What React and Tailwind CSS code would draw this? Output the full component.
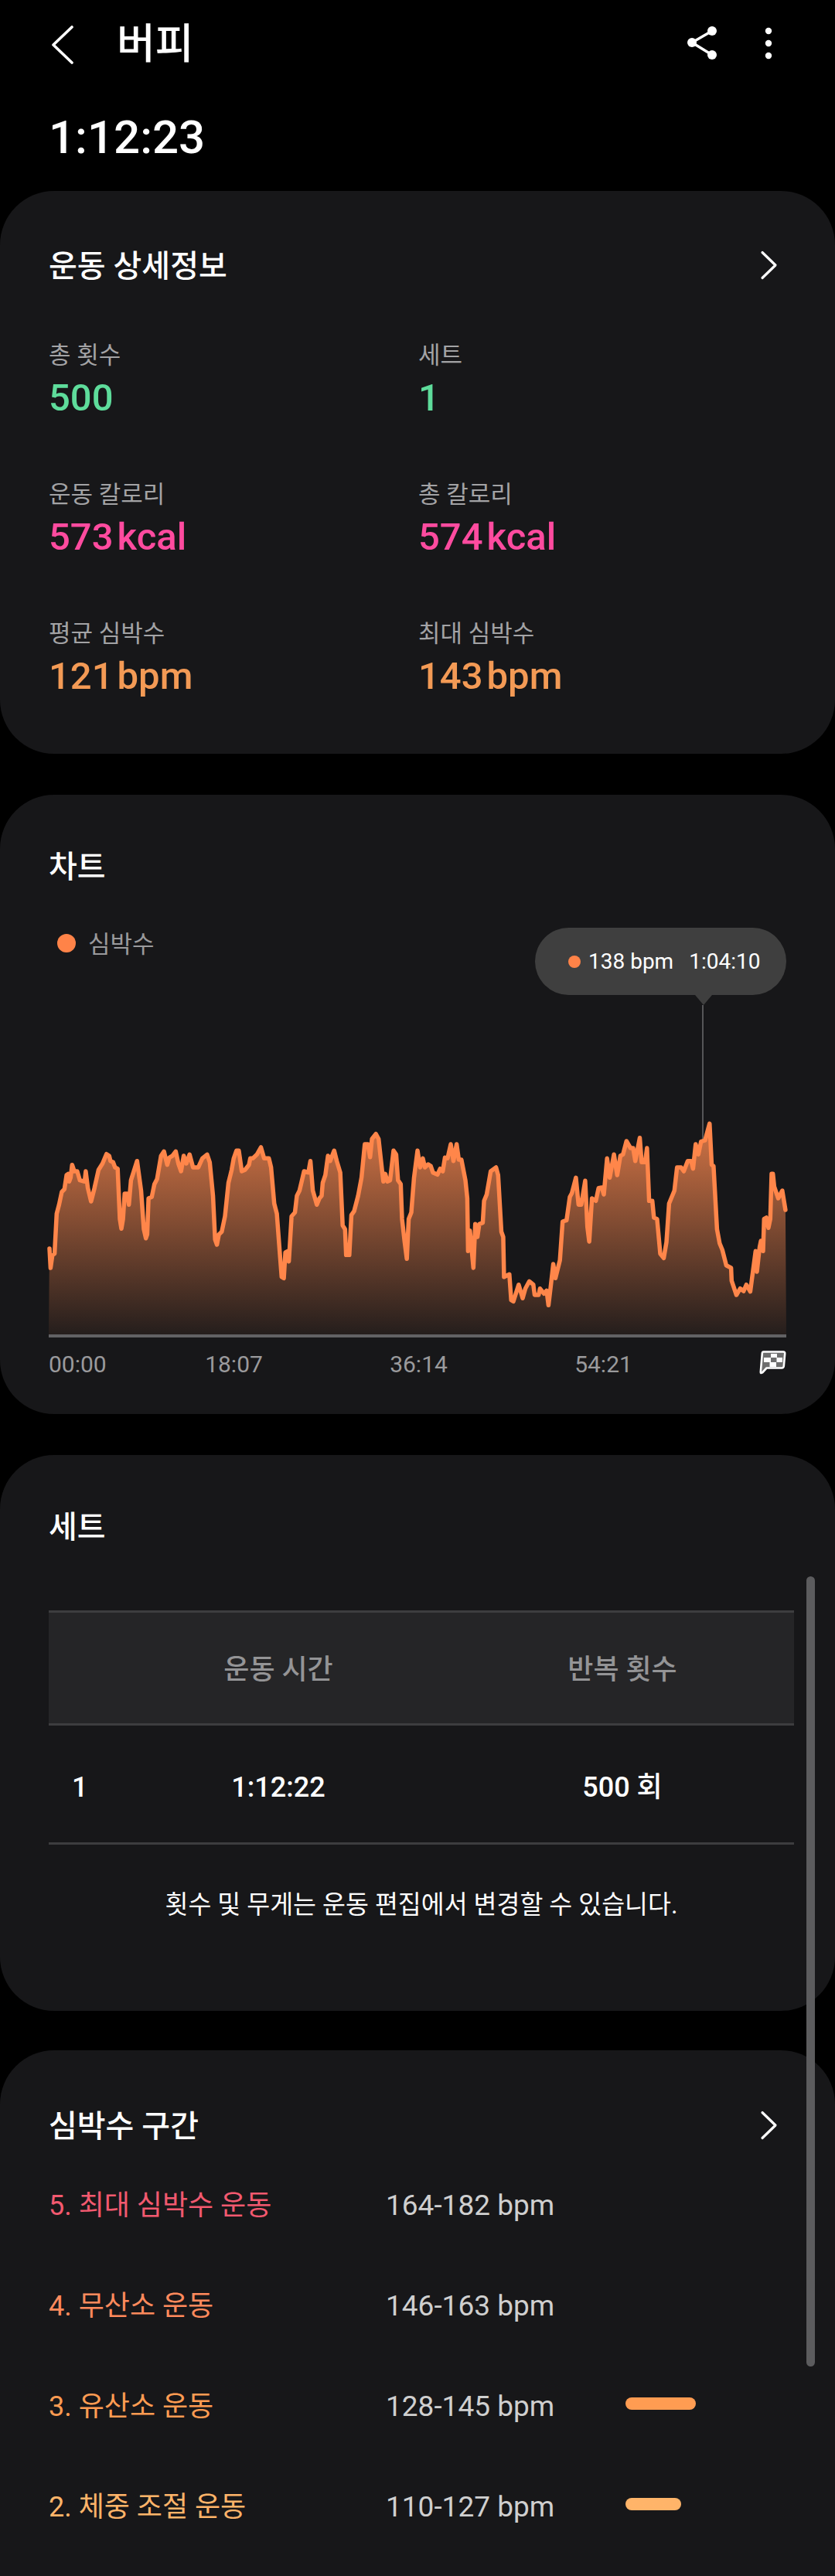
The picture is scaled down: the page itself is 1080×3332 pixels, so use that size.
import React from "react";

const left = [[186,645],[190,720],[197,670],[205,665],[213,510],[222,475],[232,425],[242,415],[250,360],[256,355],[260,385],[265,370],[271,320],[279,345],[290,345],[300,380],[318,385],[322,345],[330,410],[342,462],[355,410],[370,340],[385,315],[400,278],[410,285],[415,305],[425,310],[432,330],[442,335],[450,530],[456,568],[462,530],[468,432],[478,432],[484,475],[492,380],[515,305],[530,420],[540,570],[548,605],[553,590],[558,450],[570,445],[580,395],[590,375],[605,285],[616,268],[628,320],[636,292],[648,285],[660,268],[670,315],[680,345],[690,285],[700,315],[712,280],[725,330],[745,330],[760,295],[778,280],[788,310],[800,440],[808,610],[815,630],[822,590],[833,580],[845,520],[858,390],[870,340],[878,295],[888,265],[897,265],[908,345],[920,340],[935,320],[940,295],[950,295],[965,280],[980,252],[992,295],[1010,295],[1018,330],[1030,470],[1040,510],[1050,650],[1058,755],[1066,760],[1072,660],[1082,655],[1085,695],[1095,520],[1108,505],[1115,440],[1125,420],[1142,345],[1158,350],[1166,305],[1175,420],[1190,475],[1200,450],[1208,440],[1212,390],[1222,360],[1232,285],[1240,305],[1255,265],[1265,305],[1278,350],[1287,555],[1296,570],[1300,670],[1305,670],[1312,670],[1320,515],[1330,500],[1345,440],[1358,370],[1370,240],[1382,240],[1390,290],[1397,220],[1412,200],[1422,220],[1435,340],[1440,385],[1447,355],[1455,385],[1465,380],[1478,265],[1488,280],[1495,380],[1505,395],[1510,530],[1520,620],[1528,685],[1535,530],[1545,505],[1555,370]];
const right = [[0,265],[10,330],[20,295],[28,330],[40,318],[50,325],[58,350],[75,358],[85,335],[95,345],[103,292],[113,295],[125,240],[135,305],[147,240],[155,300],[165,300],[180,380],[187,450],[190,655],[197,575],[210,720],[217,550],[225,600],[232,550],[245,545],[250,460],[260,435],[275,345],[295,330],[303,360],[315,580],[322,600],[325,755],[345,745],[352,845],[360,850],[380,785],[395,838],[405,800],[420,772],[435,785],[440,825],[455,825],[460,800],[475,820],[485,808],[492,865],[500,795],[510,705],[518,760],[535,690],[545,540],[560,535],[572,445],[580,430],[595,370],[605,475],[615,475],[630,382],[638,560],[645,618],[655,450],[670,460],[680,410],[692,408],[700,435],[712,295],[722,370],[738,280],[750,360],[762,285],[772,280],[785,228],[800,255],[810,255],[818,305],[835,215],[842,310],[855,310],[862,255],[870,460],[882,460],[888,525],[900,530],[912,665],[925,682],[935,620],[945,470],[965,420],[975,330],[990,330],[1000,345],[1015,305],[1028,305],[1035,335],[1045,240],[1055,280],[1065,230],[1080,225],[1097,160],[1105,320],[1112,325],[1125,570],[1135,625],[1145,650],[1160,710],[1178,720],[1180,770],[1198,825],[1212,800],[1225,810],[1235,785],[1250,812],[1270,655],[1275,735],[1285,640],[1290,615],[1298,655],[1302,530],[1310,525],[1318,565],[1325,530],[1330,355],[1335,355],[1340,405],[1355,450],[1370,420],[1382,495]];
const pts = [
  ...left.map(([x, y]) => [x / 2.904, 1400 + y / 3]),
  ...right.map(([x, y]) => [540 + x / 2.904, 1400 + y / 3]),
].map(([x, y]) => [Math.round(x * 10) / 10, Math.round(y * 10) / 10]);
const linePath = "M" + pts.map((p) => p.join(" ")).join("L");
const areaPath = `M63 1726L${pts.map((p) => p.join(" ")).join("L")}L1017 1726Z`;

function Chevron() {
  return (
    <svg width="24" height="40" viewBox="0 0 24 40" fill="none" className="shrink-0">
      <path d="M3 3.5 L20 20 L3 36.5" stroke="#fff" strokeWidth="3.2" strokeLinecap="round" strokeLinejoin="round" />
    </svg>
  );
}

function Stat({ label, value, unit, color }) {
  return (
    <div>
      <div className="h-[40px] leading-[44px] text-[31px] text-[#a3a3a5] whitespace-nowrap">{label}</div>
      <div className={`h-[66px] leading-[74px] text-[49px] font-medium whitespace-nowrap ${color}`}>
        {value}
        {unit && <span className="ml-[5px]">{unit}</span>}
      </div>
    </div>
  );
}

function Zone({ label, color, range, bar }) {
  return (
    <div className="h-[130px] grid grid-cols-[436px_310px_1fr] items-center text-[36px] whitespace-nowrap">
      <div className={`pt-[4px] ${color}`}>{label}</div>
      <div className="pt-[4px] text-[#cfcfcf] text-[37px]">{range}</div>
      <div>{bar}</div>
    </div>
  );
}

export default function App() {
  return (
    <div className="relative w-[1080px] h-[3332px] overflow-hidden bg-black text-white font-[Roboto,'Noto_Sans_CJK_KR',sans-serif]">
      <header className="h-[116px] flex items-center pl-[66px] pr-[81px]">
        <svg width="30" height="50" viewBox="0 0 30 50" fill="none" className="shrink-0">
          <path d="M27 2 L3 25 L27 48" stroke="#fff" strokeWidth="3.6" strokeLinecap="round" strokeLinejoin="round" />
        </svg>
        <h1 className="ml-[55px] text-[54px] font-medium leading-[60px]">버피</h1>
        <div className="ml-auto flex items-center gap-[57px] -mt-[4px]">
          <svg width="44" height="48" viewBox="0 0 44 48" fill="none">
            <path d="M33 8 L7 23 L33 39" stroke="#fff" strokeWidth="3.4" />
            <circle cx="7" cy="23" r="6" fill="#fff" />
            <circle cx="33" cy="8" r="6" fill="#fff" />
            <circle cx="33" cy="39" r="6" fill="#fff" />
          </svg>
          <svg width="10" height="44" viewBox="0 0 10 44" fill="#fff">
            <circle cx="5" cy="6" r="4.2" />
            <circle cx="5" cy="22" r="4.2" />
            <circle cx="5" cy="38" r="4.2" />
          </svg>
        </div>
      </header>
      <div className="h-[120px] mb-[11px] pl-[63px] pt-[4px] flex items-center text-[60px] font-medium">1:12:23</div>

      <section className="rounded-[70px] bg-[#171719] pt-[64px] pb-[71px]">
        <div className="h-[64px] flex items-center justify-between pl-[63px] pr-[73px]">
          <h2 className="pt-[4px] text-[40px] font-medium">운동 상세정보</h2>
          <Chevron />
        </div>
        <div className="mt-[63px] pl-[63px] grid grid-cols-[478px_1fr] gap-y-[74px]">
          <Stat label="총 횟수" value="500" color="text-[#5edc9b]" />
          <Stat label="세트" value="1" color="text-[#5edc9b]" />
          <Stat label="운동 칼로리" value="573" unit="kcal" color="text-[#ff4b9f]" />
          <Stat label="총 칼로리" value="574" unit="kcal" color="text-[#ff4b9f]" />
          <Stat label="평균 심박수" value="121" unit="bpm" color="text-[#f39a55]" />
          <Stat label="최대 심박수" value="143" unit="bpm" color="text-[#f39a55]" />
        </div>
      </section>

      <section className="mt-[53px] rounded-[70px] bg-[#171719] pt-[68px] pb-[47px] px-[63px]">
        <h2 className="h-[48px] leading-[52px] text-[40px] font-medium">차트</h2>
        <div className="relative mt-[56px]">
          <div className="h-[40px] flex items-center pl-[11px]">
            <span className="w-[24px] h-[24px] rounded-full bg-[#ff8348]"></span>
            <span className="ml-[16px] pt-[4px] text-[31px] text-[#9a9a9c]">심박수</span>
          </div>
          <svg viewBox="63 1240 954 486" className="block w-[954px] h-[486px] overflow-visible">
            <defs>
              <linearGradient id="hrFill" gradientUnits="userSpaceOnUse" x1="0" y1="1450" x2="0" y2="1726">
                <stop offset="0" stopColor="#ff8a50" stopOpacity="0.82" />
                <stop offset="1" stopColor="#ff8a50" stopOpacity="0.06" />
              </linearGradient>
            </defs>
            <path d="M909 1300 V1475" stroke="#555557" strokeWidth="2" />
            <path d={areaPath} fill="url(#hrFill)" />
            <path d={linePath} fill="none" stroke="#ff864a" strokeWidth="5.5" strokeLinejoin="round" strokeLinecap="round" />
          </svg>
          <div className="h-[4px] bg-[#626264]"></div>
          <div className="absolute left-[629px] top-0 w-[325px] h-[87px] rounded-[44px] bg-[#3f3f3f] flex items-center pl-[43px] text-[28px] whitespace-nowrap">
            <span className="w-[16px] h-[16px] rounded-full bg-[#ff8348]"></span>
            <span className="ml-[10px]">138 bpm</span>
            <span className="ml-[20px]">1:04:10</span>
            <span className="absolute left-[207px] top-[87px] w-0 h-0 border-x-[11px] border-x-transparent border-t-[13px] border-t-[#3f3f3f]"></span>
          </div>
        </div>
        <div className="mt-[12px] h-[40px] flex items-center text-[30px] text-[#9a9a9c] whitespace-nowrap">
          <span className="w-[120px] pt-[4px]">00:00</span>
          <span className="w-[239px] pt-[4px] text-center">18:07</span>
          <span className="w-[239px] pt-[4px] text-center">36:14</span>
          <span className="w-[239px] pt-[4px] text-center">54:21</span>
          <svg width="35" height="31" viewBox="0 0 35 31" className="ml-auto">
            <path d="M5.5 1.5 H31 Q33.5 1.5 33.2 4 L31.8 20 Q31.6 22.5 29 22.5 H9.5 L4 28.5 Q1.6 30 1.8 27.5 L3.8 3.5 Q4 1.5 5.5 1.5 Z" fill="#6e6e6e" stroke="#fff" strokeWidth="2.6" strokeLinejoin="round" />
            <path d="M15 4 H23 V9 H30 V15 H22 V21 H13.5 V15 H6 V9 H15 Z M15 9 V15 H22.5 V9 Z" fill="#fff" fillRule="evenodd" />
          </svg>
        </div>
      </section>

      <section className="mt-[53px] rounded-[70px] bg-[#171719] pt-[68px] pb-[115px]">
        <h2 className="h-[48px] leading-[52px] pl-[63px] text-[40px] font-medium">세트</h2>
        <div className="mt-[85px] ml-[63px] w-[964px]">
          <div className="h-[149px] pt-[4px] bg-[#252527] border-y-[3px] border-[#3d3d3f] grid grid-cols-[74px_446px_444px] items-center text-[36px] font-medium text-[#949496] text-center">
            <span></span>
            <span>운동 시간</span>
            <span>반복 횟수</span>
          </div>
          <div className="h-[154px] border-b-[3px] border-[#3d3d3f] grid grid-cols-[74px_446px_444px] items-center text-[36px] font-medium pt-[9px]">
            <span className="pl-[30px]">1</span>
            <span className="text-center">1:12:22</span>
            <span className="text-center">500 회</span>
          </div>
        </div>
        <p className="mt-[52px] h-[48px] pl-[10px] leading-[52px] text-center text-[32.5px] whitespace-nowrap">횟수 및 무게는 운동 편집에서 변경할 수 있습니다.</p>
      </section>

      <section className="mt-[51px] rounded-[70px] bg-[#171719] pt-[73px] pl-[63px] pr-[73px] h-[800px]">
        <div className="h-[48px] flex items-center justify-between">
          <h2 className="pt-[4px] text-[40px] font-medium">심박수 구간</h2>
          <Chevron />
        </div>
        <div className="mt-[13px]">
          <Zone label="5. 최대 심박수 운동" color="text-[#f2596f]" range="164-182 bpm" />
          <Zone label="4. 무산소 운동" color="text-[#ff8a5c]" range="146-163 bpm" />
          <Zone label="3. 유산소 운동" color="text-[#ff9c52]" range="128-145 bpm" bar={<div className="w-[91px] h-[16px] rounded-full bg-[#ff9c52] -mt-[4px]"></div>} />
          <Zone label="2. 체중 조절 운동" color="text-[#ffb469]" range="110-127 bpm" bar={<div className="w-[72px] h-[16px] rounded-full bg-[#ffb469] -mt-[4px]"></div>} />
        </div>
      </section>

      <div className="absolute left-[1043px] top-[2039px] w-[11px] h-[1022px] rounded-full bg-[#5c5c5e]"></div>
    </div>
  );
}
